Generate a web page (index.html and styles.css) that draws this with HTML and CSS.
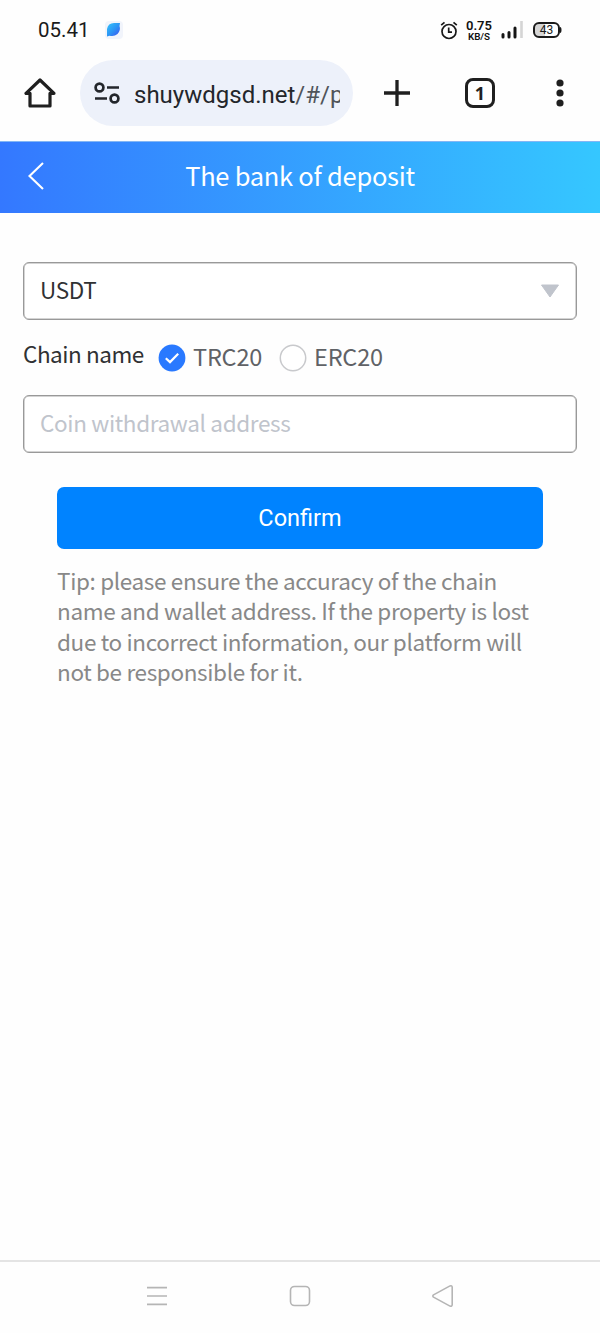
FILE: index.html
```html
<!DOCTYPE html>
<html lang="en">
<head>
<meta charset="utf-8">
<meta name="viewport" content="width=device-width, initial-scale=1">
<title>The bank of deposit</title>
<link rel="stylesheet" href="styles.css">
</head>
<body>
<div class="screen">
  <div class="status-bar">
    <span class="clock">05.41</span>
    <svg class="leaf" width="18" height="18" viewBox="0 0 18 18">
      <defs><linearGradient id="leafFill" x1="0" y1="0" x2="1" y2="1"><stop offset="0" stop-color="#35c3fa"/><stop offset=".5" stop-color="#2b96f5"/><stop offset="1" stop-color="#3d50ee"/></linearGradient></defs>
      <rect width="18" height="18" rx="4" fill="#f1f4fb"/>
      <path d="M2 15.500V8Q3 2 9 2H15L14.500 5Q16 9 12.500 13Q9 16 4.500 14.700Z" fill="url(#leafFill)"/>
    </svg>
    <div class="status-icons">
      <svg width="18" height="19" viewBox="0 0 18 19" fill="none" stroke="#181818" stroke-width="1.700">
        <circle cx="9" cy="10.500" r="7"/><path d="M8.700 6.500v4.700h3.300M1.200 4.200 4.500 1.300M16.800 4.200 13.500 1.300"/>
      </svg>
      <div class="speed"><span class="speed-value">0.75</span><span class="speed-unit">KB/S</span></div>
      <svg class="signal" width="22" height="18" viewBox="0 0 22 18">
        <path d="M2 13.500v2.500M8 11.500v4.500M14 7v9" stroke="#151515" stroke-width="3" stroke-linecap="round"/><path d="M20.500 0v17" stroke="#d5d5d5" stroke-width="2.600"/>
      </svg>
      <div class="battery"><span class="battery-level">43</span></div>
      <svg width="2" height="8" viewBox="0 0 2 8"><path d="M0 1Q1.500 1 1.500 4T0 7Z" fill="#1b1b1b"/></svg>
    </div>
  </div>

  <div class="toolbar">
    <svg class="home" width="32" height="32" viewBox="0 0 32 32" fill="none" stroke="#1f1f1f" stroke-width="3.200" stroke-linejoin="round">
      <path d="M2 16.300H6V29H26V16.300H30L16 3Z"/>
    </svg>
    <div class="address">
      <svg width="26" height="22" viewBox="0 0 26 22" fill="none" stroke="#23262b" stroke-width="2.700">
        <circle cx="5.500" cy="5.500" r="3.900"/><path d="M13 5.500h12M1 16.500h12"/><circle cx="20.500" cy="16.500" r="3.900"/>
      </svg>
      <div class="url">shuywdgsd.net<span class="url-path">/#/p</span></div>
    </div>
    <svg class="plus" width="28" height="28" viewBox="0 0 28 28" stroke="#1f1f1f" stroke-width="3.300"><path d="M14 1v26M1 14h26"/></svg>
    <div class="tabs">1</div>
    <svg class="more" width="8" height="28" viewBox="0 0 8 28" fill="#1f1f1f"><circle cx="4" cy="4" r="3.600"/><circle cx="4" cy="14" r="3.600"/><circle cx="4" cy="24" r="3.600"/></svg>
  </div>

  <header class="title-bar">
    <svg class="back" width="18" height="28" viewBox="0 0 18 28" fill="none" stroke="#fff" stroke-width="2.100"><path d="M15 1 1.500 14 15 27"/></svg>
    <h1 class="title">The bank of deposit</h1>
  </header>

  <main class="form">
    <div class="field select">
      <span class="value">USDT</span>
      <svg width="20" height="14" viewBox="0 0 20 14" fill="#c0c4cc" stroke="#c0c4cc" stroke-linejoin="round"><path d="M1.500 1h17L10 13Z"/></svg>
    </div>
    <div class="chain">
      <span class="chain-label">Chain name</span>
      <svg class="radio" width="28" height="28" viewBox="0 0 28 28" fill="none"><circle cx="14" cy="14" r="13.400" fill="#2979ff"/><path d="M7.800 14.200 12 18.100 20.200 9.800" stroke="#fff" stroke-width="2.200"/></svg>
      <span class="option first">TRC20</span>
      <svg class="radio" width="28" height="28" viewBox="0 0 28 28"><circle cx="14" cy="14" r="12.700" fill="#fff" stroke="#c8c9cc" stroke-width="1.500"/></svg>
      <span class="option">ERC20</span>
    </div>
    <div class="field"><span class="placeholder">Coin withdrawal address</span></div>
    <div class="confirm">Confirm</div>
    <p class="tip">Tip: please ensure the accuracy of the chain<br>name and wallet address. If the property is lost<br>due to incorrect information, our platform will<br>not be responsible for it.</p>
  </main>

  <nav class="system-nav">
    <svg width="22" height="22" viewBox="0 0 22 22" stroke="#b5b5b5" stroke-width="1.700"><path d="M1 2.700h20M1 11h20M1 19.300h20"/></svg>
    <svg width="22" height="22" viewBox="0 0 22 22" fill="none" stroke="#b5b5b5" stroke-width="1.600"><rect x="1.500" y="1.500" width="19" height="19" rx="4"/></svg>
    <svg width="22" height="24" viewBox="0 0 22 24" fill="none" stroke="#b5b5b5" stroke-width="1.600" stroke-linejoin="round"><path d="M18 1.900 1.500 10.900Q.2 12 1.500 13.100L18 22.100Q20 22.800 20.200 20.700V3.300Q20 1.200 18 1.900Z"/></svg>
  </nav>
</div>
</body>
</html>
```

FILE: styles.css
```css
* { box-sizing: border-box; }
body { margin: 0; background: #fefefe; font-family: "Noto Sans CJK SC", sans-serif; }
svg { display: block; flex: none; }
.screen { width: 600px; height: 1333px; display: flex; flex-direction: column; overflow: hidden; }

.status-bar { height: 60px; display: flex; align-items: center; padding: 0 38px; color: #1a1a1a; }
.clock { width: 67px; font: 20.5px/24px Roboto, sans-serif; }
.status-icons { display: flex; align-items: center; margin-left: auto; }
.speed { width: 30px; margin-left: 6px; display: flex; flex-direction: column; align-items: center; font-family: Roboto, sans-serif; font-weight: 600; color: #111; }
.speed-value { font-size: 13px; line-height: 12px; }
.speed-unit { font-size: 9.800px; line-height: 9px; }
.signal { margin: 0 0 0 7px; }
.battery { width: 27px; height: 16px; margin: 0 0 0 10px; border: 2px solid #1b1b1b; border-radius: 6px; background: linear-gradient(90deg, #d6d6d6 45%, #fff 45%); display: flex; align-items: center; justify-content: center; }
.battery-level { font: 12px/14px Roboto, sans-serif; }

.toolbar { height: 81px; display: flex; align-items: flex-start; padding: 0 0 0 24px; }
.home { margin-top: 17px; }
.address { width: 273px; height: 66px; margin-left: 24px; padding: 0 13px 0 14px; border-radius: 33px; background: #edf1fa; display: flex; align-items: center; gap: 14px; }
.url { flex: 1; overflow: hidden; white-space: nowrap; font: 24px/32px Roboto, sans-serif; color: #23262b; padding-top: 3px; }
.url-path { color: #50545a; }
.plus { margin: 19px 0 0 30px; }
.tabs { width: 30px; height: 30px; margin: 18px 0 0 54px; border: 3px solid #1f1f1f; border-radius: 8px; font: 700 18px/25px "Noto Sans", sans-serif; text-align: center; color: #1f1f1f; }
.more { margin: 19px 0 0 61px; }

.title-bar { height: 72px; display: flex; align-items: center; padding: 0 0 3px 28px; border-top: 1px solid #84b6f4; background: linear-gradient(90deg, #3478ff, #35c7ff); color: #fff; }
.title { flex: 1; margin: 0 46px 0 0; text-align: center; font-size: 25.500px; line-height: 38px; padding-bottom: 2px; letter-spacing: -.27px; font-weight: 400; }

.form { flex: 1; padding: 49px 23px 0; }
.field { height: 58px; padding: 0 16px 0 16px; border: 1.500px solid #999; border-radius: 6px; background: #fff; display: flex; align-items: center; justify-content: space-between; font-size: 22.500px; line-height: 34px; letter-spacing: -.35px; box-shadow: inset 0 0 0 .5px #aaa; }
.value, .placeholder { padding-bottom: 5px; }
.value { color: #303133; }
.placeholder { color: #c0c4cc; }
.chain { height: 75px; display: flex; align-items: center; color: #606266; }
.chain-label { width: 135px; color: #303133; margin-top: -9px; white-space: nowrap; font-size: 22.500px; line-height: 34px; letter-spacing: -.45px; }
.radio { margin-right: 7px; }
.option { font-size: 23.500px; line-height: 34px; letter-spacing: -.2px; padding-bottom: 3px; }
.option.first { width: 86px; }
.confirm { height: 62px; margin: 34px 34px 0 34px; border-radius: 7px; background: #0083ff; color: #fff; font: 23.500px/62px Roboto, sans-serif; text-align: center; }
.tip { margin: 15.500px 20px 0 34px; color: #888; font-size: 22.500px; line-height: 30.500px; letter-spacing: -.35px; white-space: nowrap; }

.system-nav { height: 73px; border-top: 2px solid #e4e4e4; display: flex; align-items: center; justify-content: space-between; padding: 0 146px 3px; }
```
